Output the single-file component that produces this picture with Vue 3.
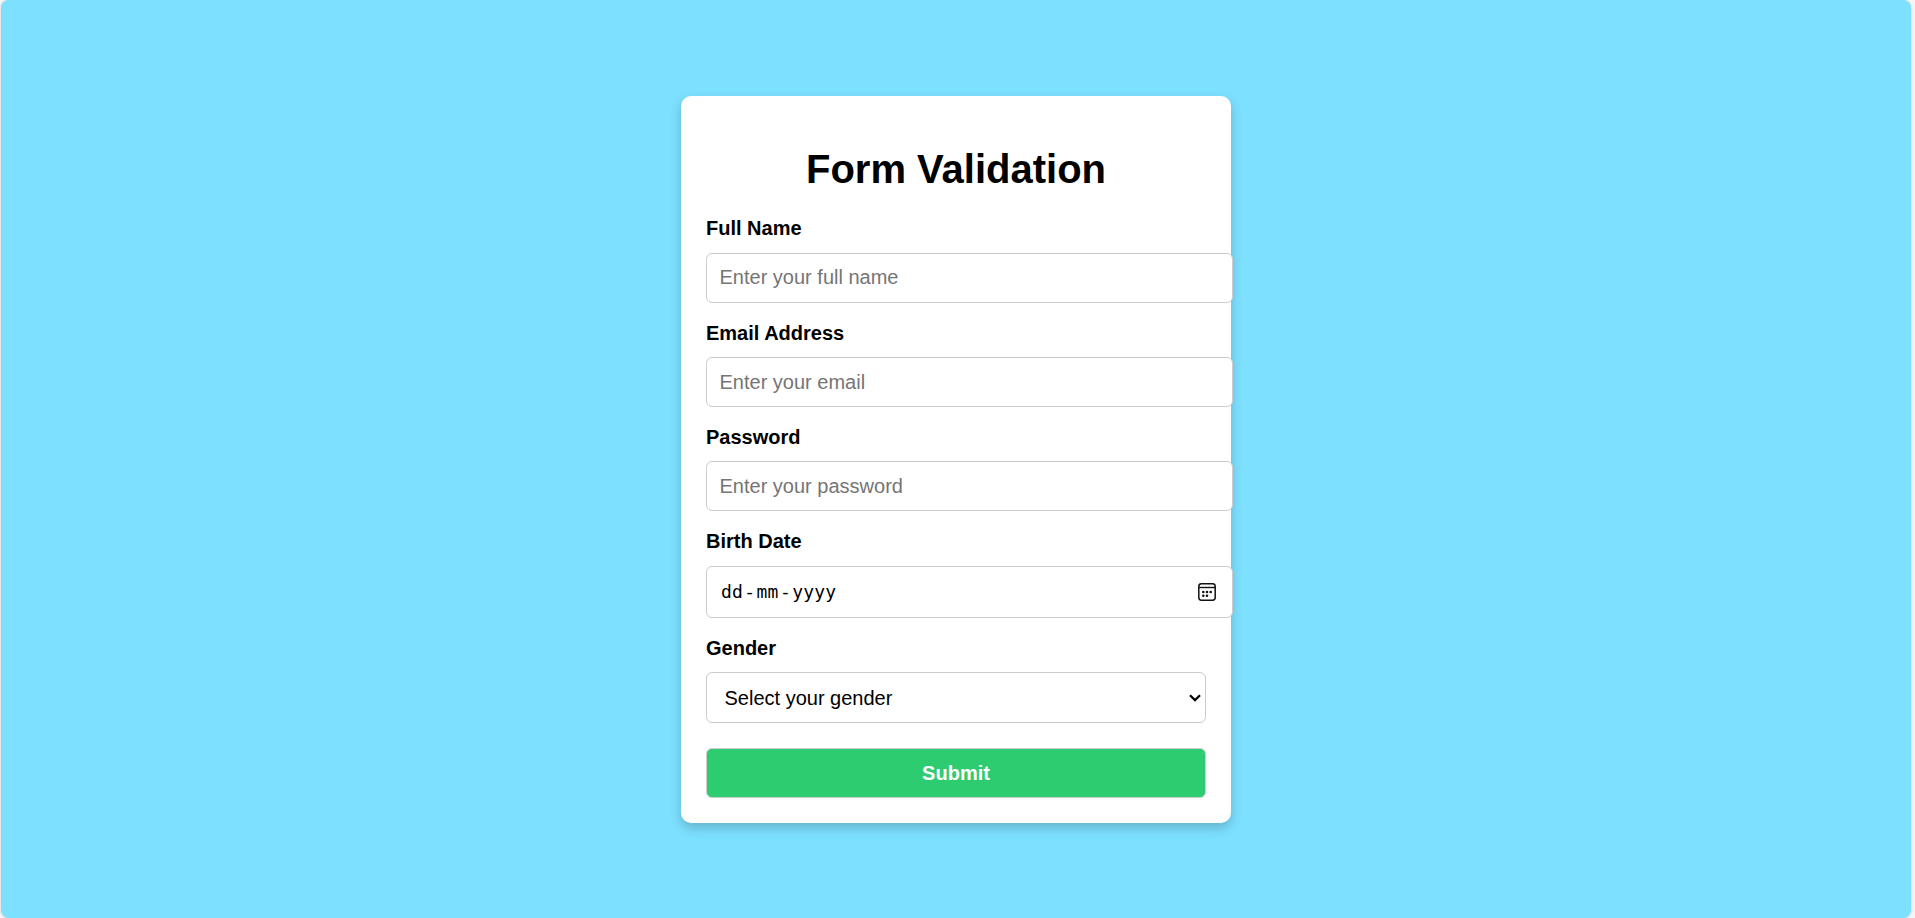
<script setup>
import { ref } from 'vue'

const textFields = [
  { id: 'name', label: 'Full Name', type: 'text', placeholder: 'Enter your full name' },
  { id: 'email', label: 'Email Address', type: 'email', placeholder: 'Enter your email' },
  { id: 'password', label: 'Password', type: 'password', placeholder: 'Enter your password' },
]
const gender = ref('')
</script>

<template>
  <div class="frame">
    <main class="page">
      <form class="card" @submit.prevent>
        <h1>Form Validation</h1>
        <div v-for="f in textFields" :key="f.id" class="field" :class="f.id">
          <label :for="f.id">{{ f.label }}</label>
          <input :id="f.id" class="control wide" :type="f.type" :placeholder="f.placeholder" />
        </div>
        <div class="field birth">
          <label>Birth Date</label>
          <div class="control wide date">
            <span class="date-text"><span>dd</span><span class="dash">-</span><span>mm</span><span class="dash">-</span><span>yyyy</span></span>
            <svg class="calendar" width="18" height="18" viewBox="0 0 18 18">
              <rect x="0.8" y="0.8" width="16.4" height="16.4" rx="2.6" fill="none" stroke="#111" stroke-width="1.5" />
              <path d="M1 4.5H17" stroke="#111" stroke-width="1.4" />
              <g fill="#111">
                <circle cx="5.3" cy="9" r="1.3" />
                <circle cx="9" cy="9" r="1.3" />
                <circle cx="12.7" cy="9" r="1.3" />
                <circle cx="5.3" cy="12.7" r="1.3" />
                <circle cx="9" cy="12.7" r="1.3" />
              </g>
            </svg>
          </div>
        </div>
        <div class="field gender">
          <label for="gender">Gender</label>
          <div class="control select-box">
            <select id="gender" v-model="gender">
              <option value="">Select your gender</option>
              <option value="male">Male</option>
              <option value="female">Female</option>
            </select>
            <svg class="chevron" width="12" height="8" viewBox="0 0 12 8">
              <path d="M1 1.2L6 6.1L11 1.2" fill="none" stroke="#000" stroke-width="2.2" />
            </svg>
          </div>
        </div>
        <button type="submit">Submit</button>
      </form>
    </main>
  </div>
</template>

<style>
body {
  margin: 0;
  overflow: hidden;
}
</style>

<style scoped>
.frame {
  box-sizing: border-box;
  height: 918px;
  padding: 0 4px 0 1px;
  background: #f5f5f5;
  font-family: "Liberation Sans", Arial, sans-serif;
}
.page {
  box-sizing: border-box;
  height: 918px;
  padding: 96px 0 0 680px;
  border-radius: 8px;
  background: #7de0ff;
  box-shadow: 0 0 3px rgba(0, 0, 0, 0.18);
}
.card {
  box-sizing: border-box;
  width: 550px;
  height: 727px;
  padding: 25px;
  border-radius: 10px;
  background: #fff;
  box-shadow: 0 5px 12px rgba(0, 0, 0, 0.2);
}
h1 {
  margin: 26px 0;
  font-size: 40px;
  line-height: 44px;
  text-align: center;
  color: #000;
}
.field {
  margin-bottom: 19px;
}
label {
  display: block;
  height: 35px;
  font-size: 20px;
  font-weight: bold;
  line-height: 23px;
  color: #000;
}
.name label,
.birth label {
  height: 36px;
}
.control {
  display: flex;
  box-sizing: border-box;
  width: 100%;
  height: 50px;
  border: 1px solid #ccc;
  border-radius: 6px;
  background: #fff;
}
.wide {
  width: 527px;
}
input {
  margin: 0;
  padding: 0 12.5px;
  font: 20px "Liberation Sans", Arial, sans-serif;
  outline: none;
}
.name input {
  padding-bottom: 2px;
}
input::placeholder {
  color: #757575;
}
.date {
  align-items: center;
  justify-content: space-between;
  height: 52px;
  padding: 0 16px 0 14px;
}
.date-text {
  font: 18px/22px "DejaVu Sans Mono", monospace;
  letter-spacing: 0.16px;
  color: #000;
}
.dash {
  margin: 0 1.3px;
}
.select-box {
  align-items: center;
  height: 51px;
  padding: 0 4px 0 17.5px;
}
select {
  flex: 1;
  appearance: none;
  padding: 0;
  border: 0;
  background: none;
  font: 20px "Liberation Sans", Arial, sans-serif;
  color: #000;
  outline: none;
}
button {
  display: block;
  box-sizing: border-box;
  width: 100%;
  height: 50px;
  margin-top: 25px;
  padding: 0;
  border: 1px solid #ccc;
  border-radius: 6px;
  background: #2ecc71;
  color: #fff;
  font: bold 20px "Liberation Sans", Arial, sans-serif;
}
</style>
